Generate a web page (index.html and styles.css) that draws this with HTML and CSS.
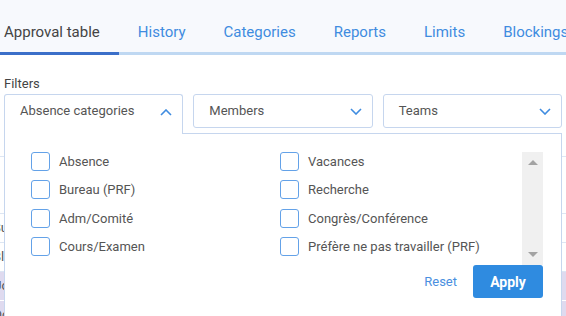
FILE: index.html
```html
<!DOCTYPE html>
<html lang="en">
<head>
  <meta charset="UTF-8">
  <meta name="viewport" content="width=device-width, initial-scale=1.0">
  <title>Approval table</title>
  <link rel="stylesheet" href="styles.css">
</head>
<body>
  <nav class="tabs">
    <div class="tab active">Approval table</div>
    <div class="tab">History</div>
    <div class="tab">Categories</div>
    <div class="tab">Reports</div>
    <div class="tab">Limits</div>
    <div class="tab">Blockings</div>
  </nav>

  <section class="filters">
    <div class="filters-label">Filters</div>

    <div class="selects">
      <div class="select open">
        <span>Absence categories</span>
        <svg class="chevron up" viewBox="0 0 12 7"><polyline points="1,6 6,1 11,6"/></svg>
      </div>
      <div class="select">
        <span>Members</span>
        <svg class="chevron" viewBox="0 0 12 7"><polyline points="1,1 6,6 11,1"/></svg>
      </div>
      <div class="select">
        <span>Teams</span>
        <svg class="chevron" viewBox="0 0 12 7"><polyline points="1,1 6,6 11,1"/></svg>
      </div>
    </div>

    <!-- table under the dropdown, only its edges show -->
    <div class="table">
      <div class="row head"></div>
      <div class="row tall"></div>
      <div class="row"><span class="cell">Su</span></div>
      <div class="row"><span class="cell">Bl</span></div>
      <div class="row marked"><span class="cell">Uo</span></div>
      <div class="row marked"><span class="cell">Oo</span></div>
    </div>

    <div class="panel">
      <div class="panel-body">
        <div class="options">
          <label class="option"><span class="box"></span>Absence</label>
          <label class="option"><span class="box"></span>Vacances</label>
          <label class="option"><span class="box"></span>Bureau (PRF)</label>
          <label class="option"><span class="box"></span>Recherche</label>
          <label class="option"><span class="box"></span>Adm/Comité</label>
          <label class="option"><span class="box"></span>Congrès/Conférence</label>
          <label class="option"><span class="box"></span>Cours/Examen</label>
          <label class="option"><span class="box"></span>Préfère ne pas travailler (PRF)</label>
        </div>
        <div class="scrollbar">
          <span class="arrow arrow-up"></span>
          <span class="arrow arrow-down"></span>
        </div>
      </div>
      <div class="panel-footer">
        <button class="reset">Reset</button>
        <button class="apply">Apply</button>
      </div>
    </div>
  </section>
</body>
</html>
```

FILE: styles.css
```css
* {
  margin: 0;
  padding: 0;
  box-sizing: border-box;
}

body {
  font-family: Roboto, 'Noto Sans', sans-serif;
  background-color: #ffffff;
  color: #444444;
  width: 566px;
  height: 316px;
  overflow: hidden;
}

.tabs {
  display: flex;
  height: 55px;
  background-color: #f7f9fd;
  box-shadow: inset 0 -3px #bfd8f2;
  white-space: nowrap;
}

.tab {
  flex-shrink: 0;
  padding: 22px 19px 0;
  font-size: 15px;
  line-height: 20px;
  color: #3f8ce0;
}

.tab.active {
  padding-left: 4px;
  color: #444444;
  box-shadow: inset 0 -3px #3b6fc9;
}

.filters {
  position: relative;
  padding: 21px 4px 0;
}

.filters-label {
  margin-bottom: 2px;
  font-size: 13px;
  line-height: 16px;
}

.selects {
  display: flex;
  gap: 10px;
}

.select {
  flex: 1;
  display: flex;
  align-items: center;
  justify-content: space-between;
  height: 34px;
  padding: 0 10px 0 15px;
  border: 1px solid #c6d6ee;
  border-radius: 3px;
  background-color: #ffffff;
  font-size: 13px;
  line-height: 16px;
  color: #555555;
}

.select.open {
  position: relative;
  z-index: 2;
  align-items: flex-start;
  height: 40px;
  margin-bottom: -6px;
  padding-top: 8px;
  border-bottom: none;
  border-radius: 3px 3px 0 0;
}

.chevron {
  width: 12px;
  height: 7px;
  fill: none;
  stroke: #3f8ce0;
  stroke-width: 1.6;
}

.chevron.up {
  margin-top: 6px;
}

.table {
  margin: 5px -4px 0;
}

.row {
  height: 29px;
  border-bottom: 1px solid #dde6f3;
  font-size: 13px;
  line-height: 28px;
  overflow: hidden;
}

.row.head {
  height: 24px;
}

.row.tall {
  height: 57px;
}

.row.marked {
  background-color: #dfdaef;
  border-bottom: 1px solid #ffffff;
}

.cell {
  display: block;
  margin-left: -7px;
  color: #555555;
}

.panel {
  position: absolute;
  z-index: 1;
  top: 78px;
  left: 4px;
  right: 4px;
  height: 200px;
  padding: 18px 18px 0 26px;
  border: 1px solid #c6d6ee;
  background-color: #ffffff;
}

.panel-body {
  display: flex;
  height: 113px;
}

.options {
  flex: 1;
  display: grid;
  grid-template-columns: 249px 1fr;
  grid-auto-rows: 19px;
  row-gap: 9.33px;
}

.option {
  display: flex;
  align-items: center;
  gap: 9px;
  font-size: 13px;
  color: #555555;
  white-space: nowrap;
}

.box {
  width: 19px;
  height: 19px;
  border: 1px solid #64a2e8;
  border-radius: 3px;
}

.scrollbar {
  position: relative;
  width: 21px;
  background-color: #f0f0f0;
}

.arrow {
  position: absolute;
  left: 6px;
  width: 0;
  height: 0;
  border-left: 5px solid transparent;
  border-right: 5px solid transparent;
}

.arrow-up {
  top: 8px;
  border-bottom: 5px solid #a3a3a3;
}

.arrow-down {
  bottom: 8px;
  border-top: 5px solid #a3a3a3;
}

.panel-footer {
  display: flex;
  justify-content: flex-end;
  align-items: center;
  gap: 16px;
}

button {
  border: none;
  background: none;
  font-family: inherit;
  font-size: 13px;
  cursor: pointer;
}

.reset {
  color: #4a8fe0;
}

.apply {
  width: 70px;
  height: 33px;
  border-radius: 3px;
  background-color: #2f8be0;
  color: #ffffff;
  font-weight: 700;
  font-size: 14px;
}
```
